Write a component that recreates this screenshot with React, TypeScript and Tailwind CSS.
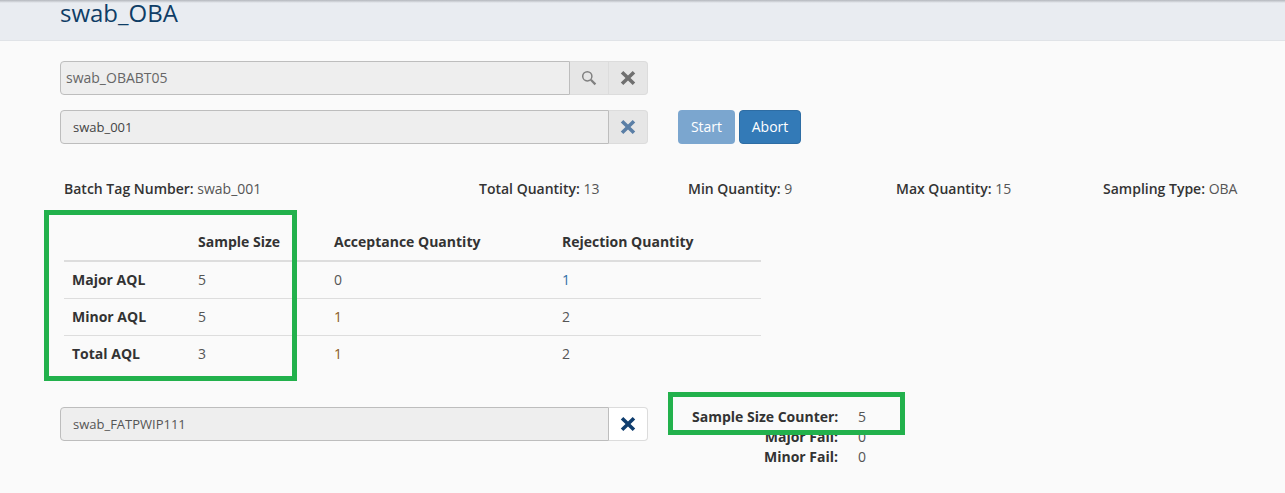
const infoItems = [
  { label: 'Batch Tag Number:', value: 'swab_001', width: 'w-[415px]' },
  { label: 'Total Quantity:', value: '13', width: 'w-[209px]' },
  { label: 'Min Quantity:', value: '9', width: 'w-[208px]' },
  { label: 'Max Quantity:', value: '15', width: 'w-[207px]' },
  { label: 'Sampling Type:', value: 'OBA', width: 'w-[140px]' },
];

const rows = [
  { name: 'Major AQL', sample: '5', accept: '0', reject: '1' },
  { name: 'Minor AQL', sample: '5', accept: '1', reject: '2' },
  { name: 'Total AQL', sample: '3', accept: '1', reject: '2' },
];

const counters = [
  { label: 'Sample Size Counter:', value: '5' },
  { label: 'Major Fail:', value: '0' },
  { label: 'Minor Fail:', value: '0' },
];

const ClearIcon = ({ color }: { color: string }) => (
  <svg width="16" height="16" viewBox="0 0 16 16" className={color} fill="currentColor">
    <path d="M3.3 .9 L8 5.6 L12.7 .9 L15.2 3.4 L10.5 8 L15.2 12.6 L12.7 15.1 L8 10.4 L3.3 15.1 L.8 12.6 L5.5 8 L.8 3.4 Z" />
  </svg>
);

const SearchIcon = () => (
  <svg width="16" height="16" viewBox="0 0 16 16" fill="none" stroke="#808080">
    <circle cx="6.3" cy="6.3" r="4.6" strokeWidth="1.5" />
    <path d="M9.8 9.8 L14.4 14.4" strokeWidth="2.2" />
  </svg>
);

export default function App() {
  return (
    <div className="min-h-[493px] bg-[#fafafa] font-['Open_Sans',sans-serif] text-sm text-[#333] overflow-hidden relative">
      <header className="h-[41px] bg-[linear-gradient(#b4b7bd,#e9ecf1_3px)] border-b border-[#e0e3e7] pl-[60px] pt-[2px]">
        <h1 className="text-2xl leading-[22px] text-[#0f3d66]">swab_OBA</h1>
      </header>

      <div className="pl-[60px] pt-5">
        <div className="flex w-[588px] h-[34px]">
          <div className="flex-1 flex items-center pl-[5px] bg-[#eeeeee] border border-[#bdbdbd] rounded-l text-[#666]">
            swab_OBABT05
          </div>
          <button className="w-[39px] flex items-center justify-center bg-[#e6e6e6] border-y border-r border-[#dcdcdc]">
            <SearchIcon />
          </button>
          <button className="w-[39px] flex items-center justify-center bg-[#e6e6e6] border-y border-r border-[#dcdcdc] rounded-r">
            <ClearIcon color="text-[#707070]" />
          </button>
        </div>

        <div className="flex items-center mt-[15px]">
          <div className="flex w-[588px] h-[34px]">
            <div className="flex-1 flex items-center pl-3 bg-[#eeeeee] border border-[#bdbdbd] rounded-l text-[13px] text-[#444]">
              swab_001
            </div>
            <button className="w-[39px] flex items-center justify-center bg-[#e6e6e6] border-y border-r border-[#dcdcdc] rounded-r">
              <ClearIcon color="text-[#5b7fa6]" />
            </button>
          </div>
          <button className="ml-[30px] w-[57px] h-[34px] rounded bg-[#7ba6cf] text-white">Start</button>
          <button className="ml-1 w-[62px] h-[34px] rounded bg-[#337ab7] border border-[#2e6da4] text-white">Abort</button>
        </div>

        <div className="flex pl-1 mt-[35px] h-5 leading-5 whitespace-nowrap">
          {infoItems.map((item) => (
            <div key={item.label} className={item.width}>
              <span className="font-semibold">{item.label}</span> <span className="text-[#555]">{item.value}</span>
            </div>
          ))}
        </div>

        <table className="ml-1 mt-[24px] w-[697px] table-fixed border-collapse">
          <thead>
            <tr className="h-[38px] border-b-2 border-[#dddddd] text-left">
              <th className="w-[126px]"></th>
              <th className="w-[137px] px-2 font-bold">Sample Size</th>
              <th className="w-[227px] pl-[7px] pr-2 font-bold">Acceptance Quantity</th>
              <th className="px-2 font-bold">Rejection Quantity</th>
            </tr>
          </thead>
          <tbody>
            {rows.map((row, i) => (
              <tr key={row.name} className={i < 2 ? 'h-[37px] border-b border-[#dddddd]' : 'h-[37px]'}>
                <td className="px-2 font-bold">{row.name}</td>
                <td className="px-2 text-[#555]">{row.sample}</td>
                <td className={row.accept === '1' ? 'pl-[7px] pr-2 text-[#8a5a1e]' : 'pl-[7px] pr-2 text-[#555]'}>{row.accept}</td>
                <td className={row.reject === '1' ? 'px-2 text-[#2f6ea5]' : 'px-2 text-[#555]'}>{row.reject}</td>
              </tr>
            ))}
          </tbody>
        </table>

        <div className="flex items-start mt-[35px]">
          <div className="flex w-[588px] h-[34px]">
            <div className="flex-1 flex items-center pl-3 bg-[#eeeeee] border border-[#bdbdbd] rounded-l text-[13px] text-[#555]">
              swab_FATPWIP111
            </div>
            <button className="w-[39px] flex items-center justify-center bg-white border-y border-r border-[#dcdcdc] rounded-r">
              <ClearIcon color="text-[#0f3d6e]" />
            </button>
          </div>
          <div className="ml-11">
            {counters.map((c) => (
              <div key={c.label} className="flex h-5 leading-5 whitespace-nowrap">
                <span className="w-[146px] text-right font-bold">{c.label}</span>
                <span className="ml-5 text-[#555]">{c.value}</span>
              </div>
            ))}
          </div>
        </div>
      </div>

      {/* Green annotation boxes */}
      <div className="absolute left-[44px] top-[210px] w-[253px] h-[171px] border-[5px] border-[#22b14c]" />
      <div className="absolute left-[668px] top-[392px] w-[237px] h-[43px] border-[5px] border-[#22b14c]" />
    </div>
  );
}
